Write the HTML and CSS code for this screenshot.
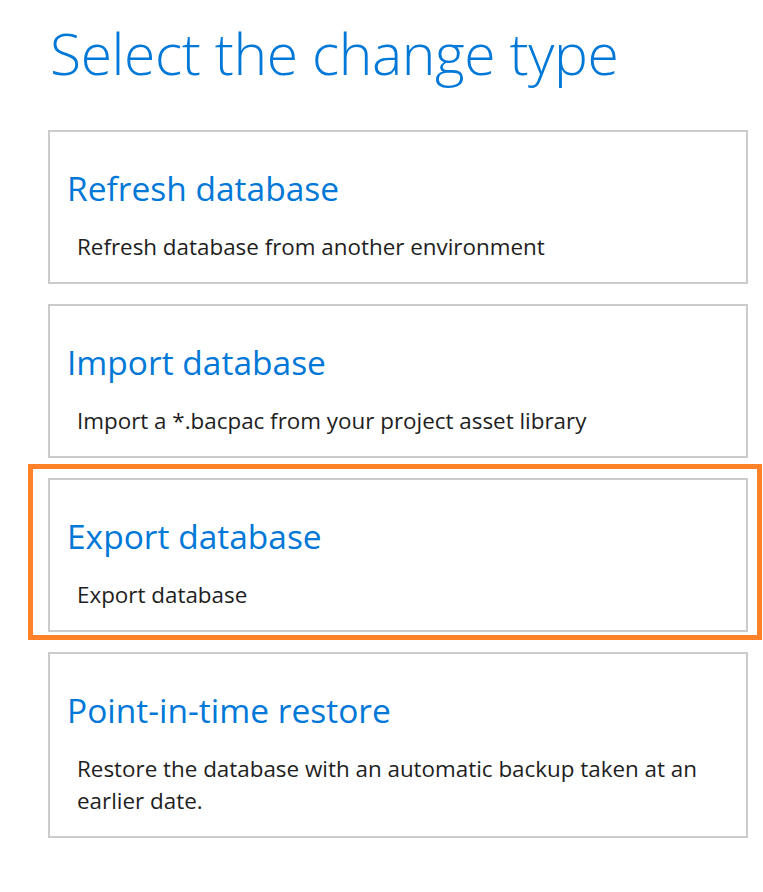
FILE: index.html
```html
<!DOCTYPE html>
<html lang="en">
<head>
<meta charset="utf-8">
<title>Select the change type</title>
<link rel="stylesheet" href="styles.css">
</head>
<body>
<main class="page">
  <h1 class="title">Select the change type</h1>
  <div class="list">
    <div class="card">
      <h2 class="card-title">Refresh database</h2>
      <p class="card-desc">Refresh database from another environment</p>
    </div>
    <div class="card">
      <h2 class="card-title">Import database</h2>
      <p class="card-desc">Import a *.bacpac from your project asset library</p>
    </div>
    <div class="card card-selected">
      <h2 class="card-title">Export database</h2>
      <p class="card-desc">Export database</p>
      <span class="highlight" aria-hidden="true"></span>
    </div>
    <div class="card">
      <h2 class="card-title">Point-in-time restore</h2>
      <p class="card-desc">Restore the database with an automatic backup taken at an earlier date.</p>
    </div>
  </div>
</main>
</body>
</html>
```
FILE: styles.css
```css
html, body {
  margin: 0;
  padding: 0;
  background: #ffffff;
}
.page {
  font-family: "Open Sans", "Noto Sans", sans-serif;
  padding: 13px 0 0 48px;
  width: 700px;
}
.title {
  margin: 0 0 0 2px;
  font-weight: 300;
  font-size: 57px;
  line-height: 80px;
  color: #0078d7;
  letter-spacing: -0.4px;
}
.list {
  display: flex;
  flex-direction: column;
  gap: 20px;
  margin-top: 37px;
}
.card {
  position: relative;
  border: 2px solid #cbcbcb;
  padding: 34px 17px 19px 17px;
}
.card-title {
  margin: 0;
  font-weight: 400;
  font-size: 33.5px;
  line-height: 44px;
  color: #0078d7;
}
.card-desc {
  margin: 21px 30px 0 10px;
  font-size: 22.4px;
  line-height: 32px;
  color: #1e1e1e;
}
.highlight {
  position: absolute;
  left: -22px;
  top: -16px;
  right: -16px;
  bottom: -10px;
  border: 5px solid #ff8228;
  pointer-events: none;
}
```
